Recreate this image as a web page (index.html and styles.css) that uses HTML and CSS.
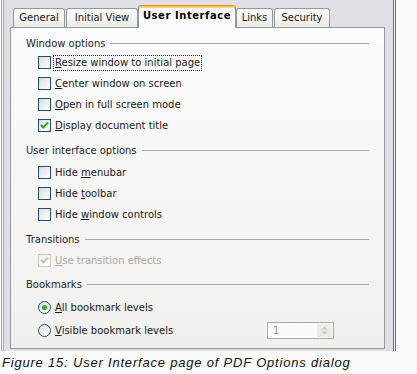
FILE: index.html
```html
<!DOCTYPE html>
<html lang="en">
<head>
<meta charset="utf-8">
<title>PDF Options - User Interface</title>
<link rel="stylesheet" href="styles.css">
</head>
<body>
<div class="frame">
  <div class="dialog">
    <div class="tabs">
      <div class="tab tab-general">General</div>
      <div class="tab tab-initial">Initial View</div>
      <div class="tab tab-ui is-active">User Interface</div>
      <div class="tab tab-links">Links</div>
      <div class="tab tab-security">Security</div>
    </div>
    <div class="panel">
      <section class="group group-window">
        <div class="group-title"><span>Window options</span><i class="rule"></i></div>
        <div class="options">
          <div class="row"><span class="check"></span><span class="label focus"><u>R</u>esize window to initial page</span></div>
          <div class="row"><span class="check"></span><span class="label"><u>C</u>enter window on screen</span></div>
          <div class="row"><span class="check"></span><span class="label"><u>O</u>pen in full screen mode</span></div>
          <div class="row"><span class="check is-checked"><svg viewBox="0 0 11 11" width="11" height="11"><path d="M2 5 L4.3 7.4 L9 2.6" fill="none" stroke="#21a121" stroke-width="2"/></svg></span><span class="label"><u>D</u>isplay document title</span></div>
        </div>
      </section>
      <section class="group group-ui">
        <div class="group-title"><span>User interface options</span><i class="rule"></i></div>
        <div class="options">
          <div class="row"><span class="check"></span><span class="label">Hide <u>m</u>enubar</span></div>
          <div class="row"><span class="check"></span><span class="label">Hide <u>t</u>oolbar</span></div>
          <div class="row"><span class="check"></span><span class="label">Hide <u>w</u>indow controls</span></div>
        </div>
      </section>
      <section class="group group-transitions">
        <div class="group-title"><span>Transitions</span><i class="rule"></i></div>
        <div class="options">
          <div class="row is-disabled"><span class="check is-checked"><svg viewBox="0 0 11 11" width="11" height="11"><path d="M2 5 L4.3 7.4 L9 2.6" fill="none" stroke="#c4c3bb" stroke-width="2"/></svg></span><span class="label"><u>U</u>se transition effects</span></div>
        </div>
      </section>
      <section class="group group-bookmarks">
        <div class="group-title"><span>Bookmarks</span><i class="rule"></i></div>
        <div class="options">
          <div class="row row-radio"><span class="radio"><svg viewBox="0 0 13 13" width="13" height="13"><defs><linearGradient id="rg1" x1="0" y1="0" x2="1" y2="1"><stop offset="0" stop-color="#dcdcd7"/><stop offset="1" stop-color="#ffffff"/></linearGradient></defs><circle cx="6.5" cy="6.5" r="6" fill="url(#rg1)" stroke="#1c5180"/><circle cx="6.5" cy="6.5" r="2.6" fill="#2db32d"/></svg></span><span class="label"><u>A</u>ll bookmark levels</span></div>
          <div class="row row-radio"><span class="radio"><svg viewBox="0 0 13 13" width="13" height="13"><defs><linearGradient id="rg2" x1="0" y1="0" x2="1" y2="1"><stop offset="0" stop-color="#dcdcd7"/><stop offset="1" stop-color="#ffffff"/></linearGradient></defs><circle cx="6.5" cy="6.5" r="6" fill="url(#rg2)" stroke="#1c5180"/></svg></span><span class="label"><u>V</u>isible bookmark levels</span>
            <div class="spin"><span class="spin-value">1</span><span class="spin-btns"><svg viewBox="0 0 13 13" width="13" height="13"><path d="M3.5 5.5 L6.5 2.5 L9.5 5.5 Z M3.5 7.5 L6.5 10.5 L9.5 7.5 Z" fill="#c9c9c4"/></svg></span></div>
          </div>
        </div>
      </section>
    </div>
  </div>
</div>
<p class="caption">Figure 15: User Interface page of PDF Options dialog</p>
</body>
</html>
```

FILE: styles.css
```css
* { box-sizing: border-box; }

html, body {
  margin: 0;
  padding: 0;
  background: #fbfbfb;
}

body {
  font-family: "DejaVu Sans", Verdana, sans-serif;
  font-size: 10px;
  color: #1a1a1a;
  width: 417px;
  height: 374px;
  overflow: hidden;
}

.frame {
  margin-left: 1px;
  width: 395px;
  padding: 0 1px;
  border-left: 1px solid #a9a8ae;
  border-right: 1px solid #6f6b86;
  background: #f4f4f6;
}

.dialog {
  border-left: 1px solid #a9a8ae;
  border-right: 1px solid #6f6b86;
  background: #e0dfe5;
  padding: 5px 0 2px 6px;
}

/* tabs */
.tabs {
  display: flex;
  align-items: flex-end;
  height: 22px;
  padding-left: 3px;
  position: relative;
  z-index: 1;
}

.tab {
  height: 19px;
  line-height: 18px;
  text-align: center;
  border: 1px solid #919b9c;
  border-bottom: none;
  border-radius: 3px 3px 0 0;
  background: linear-gradient(#fefefe, #ecebe6);
  color: #1a1a1a;
  white-space: nowrap;
}

.tab-general { width: 52px; margin-right: 1px; }
.tab-initial { width: 72px; }
.tab-ui { width: 98px; }
.tab-links { width: 37px; margin-right: 1px; }
.tab-security { width: 56px; }

.tab.is-active {
  height: 23px;
  margin-bottom: -1px;
  border-top: 1px solid #e68b2c;
  box-shadow: inset 0 1px 0 #ffc73c, inset 0 2px 0 #ffd87a;
  background: #fcfcfe;
  font-weight: bold;
  letter-spacing: 0.55px;
  line-height: 20px;
  color: #000;
}

/* panel */
.panel {
  width: 375px;
  height: 322px;
  border: 1px solid #919b9c;
  background: linear-gradient(#fcfcfe, #f1f0ec);
  padding-top: 7px;
}

.group + .group { margin-top: 6px; }
.group-bookmarks.group { margin-top: 5px; }

.group-title {
  display: flex;
  align-items: center;
  height: 16px;
  padding-left: 15px;
  color: #1f1f2a;
}

.rule {
  flex: 1;
  height: 1px;
  background: #a9a9ad;
  margin: 0 15px 0 5px;
}

.options { margin-top: 3px; }
.group-window .options { margin-top: 1px; }
.group-ui .options,
.group-bookmarks .options { margin-top: 4px; }

.row {
  display: flex;
  align-items: center;
  height: 21px;
  padding-left: 27px;
}

.row-radio { height: 23px; }

.check {
  width: 13px;
  height: 13px;
  flex: none;
  border: 1px solid #1c5180;
  background: linear-gradient(135deg, #dcdcd7, #ffffff);
  display: flex;
  align-items: center;
  justify-content: center;
}

.radio {
  width: 13px;
  height: 13px;
  flex: none;
  display: flex;
}

.label {
  margin-left: 3px;
  padding: 1px 1px;
  line-height: 12px;
  white-space: nowrap;
}

.label u { text-decoration-thickness: 1px; text-underline-offset: 1px; }

.focus { outline: 1px dotted #222; outline-offset: 0; }

.is-disabled .check { border-color: #cac8bb; background: linear-gradient(135deg, #f0efea, #ffffff); }
.is-disabled .label { color: #aca899; }

.spin {
  margin-left: auto;
  margin-right: 50px;
  width: 67px;
  height: 17px;
  border: 1px solid #a5abb3;
  background: #fbfbfa;
  display: flex;
  align-items: center;
}

.spin-value {
  flex: 1;
  padding-left: 5px;
  color: #8e8e94;
}

.spin-btns {
  width: 15px;
  height: 13px;
  margin-right: 1px;
  background: #ecebe6;
  display: flex;
  align-items: center;
  justify-content: center;
}

.caption {
  margin: 4px 0 0 2px;
  font-family: "Liberation Sans", Arial, sans-serif;
  font-style: italic;
  font-size: 13px;
  letter-spacing: 0.8px;
  line-height: 16px;
  color: #111;
}
```
